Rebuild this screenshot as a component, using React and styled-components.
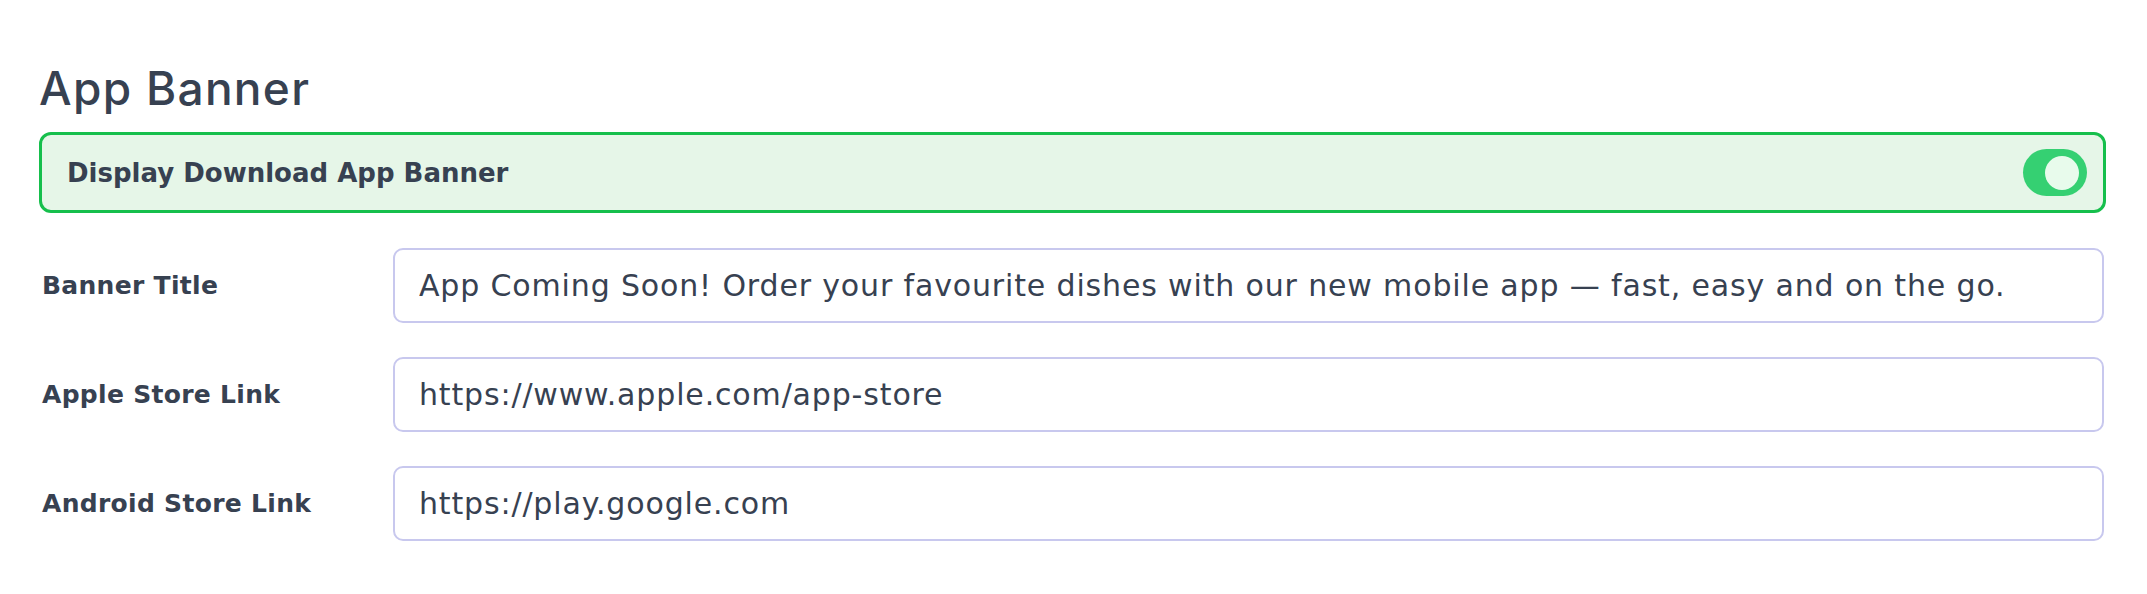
import styled, { createGlobalStyle } from "styled-components";
import { useState } from "react";

const Global = createGlobalStyle`
  body {
    margin: 0;
    background: #ffffff;
    font-family: "DejaVu Sans", Inter, sans-serif;
    color: #374151;
  }
`;

const Page = styled.div`
  padding: 62px 41px 40px 39px;
`;

const Heading = styled.h2`
  margin: 0 0 17px;
  font-family: Inter, sans-serif;
  font-size: 46px;
  line-height: 53px;
  font-weight: 500;
  letter-spacing: 1.3px;
  color: #374151;
`;

const ToggleBox = styled.div`
  height: 75px;
  border: 3px solid #16bf4c;
  border-radius: 12px;
  background: #e6f6e8;
  display: flex;
  align-items: center;
  justify-content: space-between;
  padding: 0 16px 0 25px;
  margin-bottom: 35px;
`;

const ToggleLabel = styled.span`
  font-size: 26px;
  font-weight: 700;
`;

const Switch = styled.button`
  width: 64px;
  height: 47px;
  border: none;
  border-radius: 24px;
  background: ${p => (p.on ? "#35d072" : "#cbd5e1")};
  display: flex;
  align-items: center;
  justify-content: ${p => (p.on ? "flex-end" : "flex-start")};
  padding: 0 8px;
  cursor: pointer;
`;

const Knob = styled.span`
  width: 34px;
  height: 34px;
  border-radius: 50%;
  background: #e8fbec;
`;

const Fields = styled.div`
  display: flex;
  flex-direction: column;
  gap: 34px;
`;

const Row = styled.label`
  display: grid;
  grid-template-columns: 354px 1fr;
  align-items: center;
  margin-right: 2px;
`;

const Label = styled.span`
  font-size: 25px;
  font-weight: 700;
  letter-spacing: 0.3px;
  padding-left: 3px;
`;

const Input = styled.input`
  height: 75px;
  box-sizing: border-box;
  border: 2px solid #c8c8ee;
  border-radius: 10px;
  padding: 0 24px;
  font-family: "DejaVu Sans", Inter, sans-serif;
  font-size: 30px;
  letter-spacing: 0.85px;
  color: #374151;
  background: #fff;
  outline: none;
  width: 100%;
`;

const fields = [
  {
    label: "Banner Title",
    value: "App Coming Soon! Order your favourite dishes with our new mobile app — fast, easy and on the go.",
  },
  { label: "Apple Store Link", value: "https://www.apple.com/app-store" },
  { label: "Android Store Link", value: "https://play.google.com" },
];

export default function App() {
  const [on, setOn] = useState(true);
  const [values, setValues] = useState(fields.map(f => f.value));

  return (
    <Page>
      <Global />
      <Heading>App Banner</Heading>
      <ToggleBox>
        <ToggleLabel>Display Download App Banner</ToggleLabel>
        <Switch on={on} onClick={() => setOn(!on)}>
          <Knob />
        </Switch>
      </ToggleBox>
      <Fields>
        {fields.map((f, i) => (
          <Row key={f.label}>
            <Label>{f.label}</Label>
            <Input
              value={values[i]}
              onChange={e => {
                const next = [...values];
                next[i] = e.target.value;
                setValues(next);
              }}
            />
          </Row>
        ))}
      </Fields>
    </Page>
  );
}
